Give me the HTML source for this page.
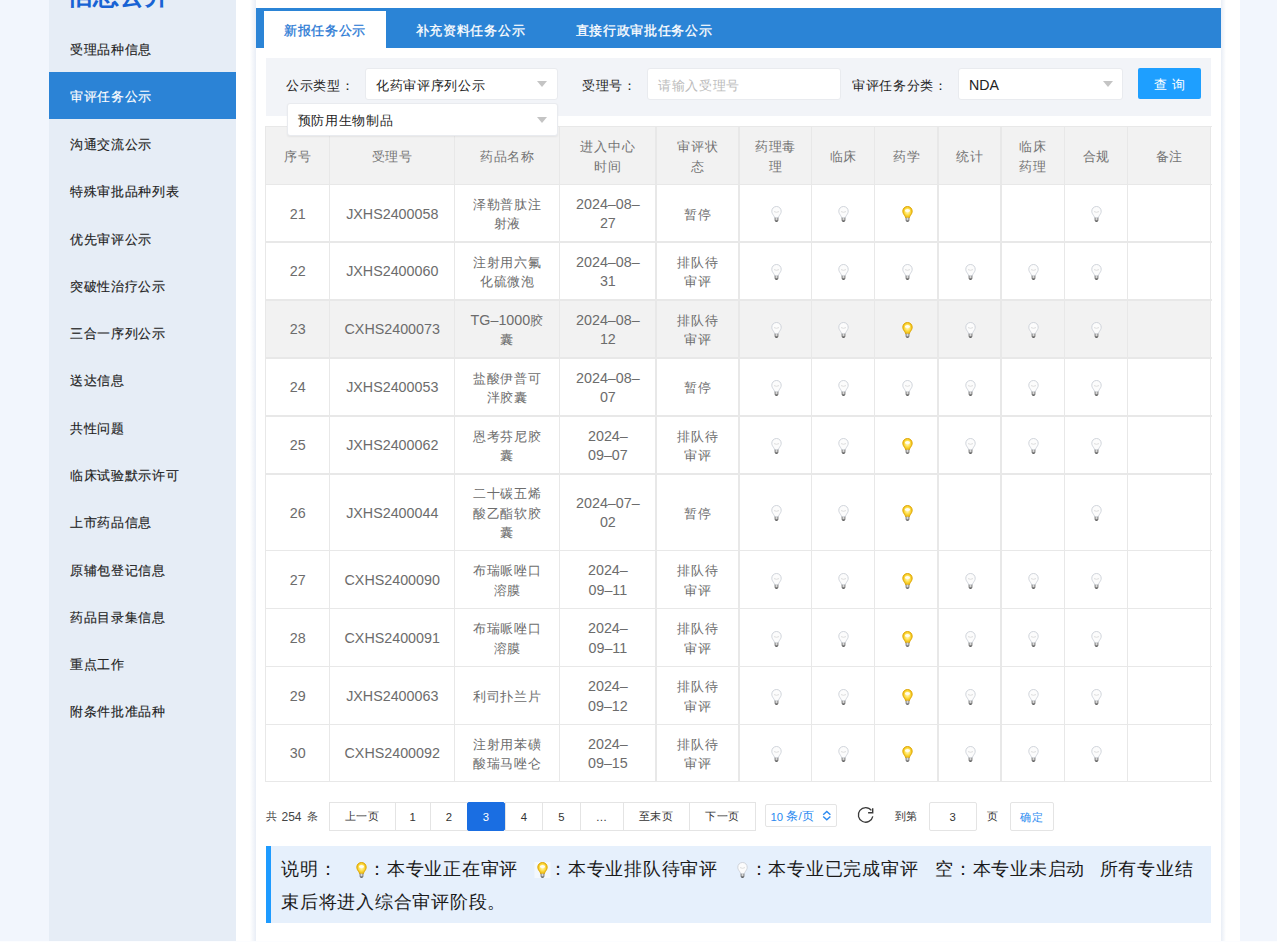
<!DOCTYPE html><html><head><meta charset="utf-8"><style>

*{box-sizing:border-box;margin:0;padding:0}
html,body{width:1280px;height:942px;overflow:hidden}
body{position:relative;background:#f2f6fd;font-family:"Liberation Sans",sans-serif;color:#333}
.abs{position:absolute}
.t{position:absolute;white-space:nowrap;line-height:1}
#side{position:absolute;left:49px;top:0;width:187px;height:941px;background:#e6edf6;overflow:hidden}
#white{position:absolute;left:236px;top:0;width:1004px;height:942px;background:#fff}
#panel{position:absolute;left:256px;top:0;width:965px;height:941px;background:#fff}
#shl{position:absolute;left:250px;top:0;width:6px;height:941px;background:linear-gradient(to right,rgba(230,236,245,0),#e9eef6)}
#shr{position:absolute;left:1221px;top:0;width:5px;height:941px;background:linear-gradient(to right,#e9eef6,rgba(230,236,245,0))}
.k{font-size:13.4px;letter-spacing:0.7px}
.si{position:absolute;left:0;width:187px;height:47.3px;line-height:47.3px;padding-left:21px;font-size:13.6px;color:#222;-webkit-text-stroke:0.15px #222}
.si > span{position:relative;top:2px}
.si.act{background:#2b83d6;color:#fff;-webkit-text-stroke:0.15px #fff}
.tab{position:absolute;top:11px;height:36.6px;line-height:39px;font-size:13.7px;color:#fff;text-align:center}
.tab.act{background:#fff;color:#2a7ad5;-webkit-text-stroke:0.3px #2a7ad5}
.tab{-webkit-text-stroke:0.3px #fff}
.lbl{position:absolute;font-size:13.7px;color:#222;line-height:32px;top:70px}
.sel{position:absolute;background:#fff;border:1px solid #e9ebef;border-radius:3px;font-size:14.2px;color:#222;line-height:32.5px;padding-left:10px}
.arr{position:absolute;width:0;height:0;border-left:5.5px solid transparent;border-right:5.5px solid transparent;border-top:6px solid #c4c4c4}
.hl{position:absolute;background:#e8e8e8}
.cell{position:absolute;display:flex;align-items:center;justify-content:center;text-align:center;font-size:14.3px;line-height:19.3px;color:#6c6c6c;padding-top:2px}
.hdr{color:#747474}
.pg{position:absolute;top:801.5px;height:29.5px;border:1px solid #e4e4e4;font-size:11.3px;color:#333;display:flex;align-items:center;justify-content:center;padding-top:1px}
.pk{font-size:11.4px;letter-spacing:0.5px}

</style></head><body>
<div id="white"></div>
<div id="side">
<div class="t" style="left:17.5px;top:-17.5px;font-size:26px;font-weight:bold;color:#1863d4;line-height:24px">信息公开</div>
<div class="si" style="top:24.35px"><span><span class="k">受理品种信息</span></span></div>
<div class="si act" style="top:71.64px"><span style="top:1.3px"><span class="k">审评任务公示</span></span></div>
<div class="si" style="top:118.93px"><span><span class="k">沟通交流公示</span></span></div>
<div class="si" style="top:166.22px"><span><span class="k">特殊审批品种列表</span></span></div>
<div class="si" style="top:213.51px"><span><span class="k">优先审评公示</span></span></div>
<div class="si" style="top:260.80px"><span><span class="k">突破性治疗公示</span></span></div>
<div class="si" style="top:308.09px"><span><span class="k">三合一序列公示</span></span></div>
<div class="si" style="top:355.38px"><span><span class="k">送达信息</span></span></div>
<div class="si" style="top:402.67px"><span><span class="k">共性问题</span></span></div>
<div class="si" style="top:449.96px"><span><span class="k">临床试验默示许可</span></span></div>
<div class="si" style="top:497.25px"><span><span class="k">上市药品信息</span></span></div>
<div class="si" style="top:544.54px"><span><span class="k">原辅包登记信息</span></span></div>
<div class="si" style="top:591.83px"><span><span class="k">药品目录集信息</span></span></div>
<div class="si" style="top:639.12px"><span><span class="k">重点工作</span></span></div>
<div class="si" style="top:686.41px"><span><span class="k">附条件批准品种</span></span></div>
</div>
<div id="shl"></div><div id="shr"></div><div id="panel"></div>
<div class="abs" style="left:256px;top:8px;width:965px;height:39.5px;background:#2b84d6"></div>
<div class="tab act" style="left:264px;width:122px"><span class="k">新报任务公示</span></div>
<div class="tab" style="left:386px;width:169px"><span class="k">补充资料任务公示</span></div>
<div class="tab" style="left:555px;width:178px"><span class="k">直接行政审批任务公示</span></div>
<div class="abs" style="left:266px;top:58px;width:945px;height:58.3px;background:#f2f4f8"></div>
<div class="lbl" style="left:286px"><span class="k">公示类型：</span></div>
<div class="sel" style="left:365px;top:68px;width:192.5px;height:32.3px"><span class="k">化药审评序列公示</span></div>
<div class="arr" style="left:537px;top:81px"></div>
<div class="lbl" style="left:582px"><span class="k">受理号：</span></div>
<div class="sel" style="left:647px;top:68px;width:193.5px;height:32.3px;color:#bbb"><span class="k">请输入受理号</span></div>
<div class="lbl" style="left:852px"><span class="k">审评任务分类：</span></div>
<div class="sel" style="left:958px;top:68px;width:165px;height:32.3px">NDA</div>
<div class="arr" style="left:1103px;top:81px"></div>
<div class="abs" style="left:1138px;top:67.5px;width:63px;height:31.3px;background:#1e9fff;border-radius:2px;color:#fff;font-size:13.7px;line-height:33px;text-align:center;letter-spacing:0;padding-left:0.7px"><span class="k">查</span> <span class="k">询</span></div>
<div class="abs" style="left:266px;top:126.5px;width:945px;height:58px;background:#f2f2f2"></div>
<div class="abs" style="left:266px;top:300px;width:945px;height:58px;background:#f2f2f2"></div>
<svg width="0" height="0" style="position:absolute"><defs><radialGradient id="gy" cx="0.5" cy="0.45" r="0.55"><stop offset="0" stop-color="#fffbd8"/><stop offset="0.5" stop-color="#ffe050"/><stop offset="1" stop-color="#eab500"/></radialGradient><linearGradient id="gb" x1="0" x2="1"><stop offset="0" stop-color="#777"/><stop offset="0.5" stop-color="#d8d8d8"/><stop offset="1" stop-color="#777"/></linearGradient></defs></svg>
<div class="cell hdr" style="left:266px;top:126.5px;width:63.5px;height:58.0px"><div><span class="k">序号</span></div></div>
<div class="cell hdr" style="left:329.5px;top:126.5px;width:125.5px;height:58.0px"><div><span class="k">受理号</span></div></div>
<div class="cell hdr" style="left:455px;top:126.5px;width:104.5px;height:58.0px"><div><span class="k">药品名称</span></div></div>
<div class="cell hdr" style="left:559.5px;top:126.5px;width:96.75px;height:58.0px"><div><span class="k">进入中心</span><br><span class="k">时间</span></div></div>
<div class="cell hdr" style="left:656.25px;top:126.5px;width:83.0px;height:58.0px"><div><span class="k">审评状</span><br><span class="k">态</span></div></div>
<div class="cell hdr" style="left:739.25px;top:126.5px;width:72.75px;height:58.0px"><div><span class="k">药理毒</span><br><span class="k">理</span></div></div>
<div class="cell hdr" style="left:812px;top:126.5px;width:63px;height:58.0px"><div><span class="k">临床</span></div></div>
<div class="cell hdr" style="left:875px;top:126.5px;width:63.25px;height:58.0px"><div><span class="k">药学</span></div></div>
<div class="cell hdr" style="left:938.25px;top:126.5px;width:63.0px;height:58.0px"><div><span class="k">统计</span></div></div>
<div class="cell hdr" style="left:1001.25px;top:126.5px;width:63.75px;height:58.0px"><div><span class="k">临床</span><br><span class="k">药理</span></div></div>
<div class="cell hdr" style="left:1065px;top:126.5px;width:63px;height:58.0px"><div><span class="k">合规</span></div></div>
<div class="cell hdr" style="left:1128px;top:126.5px;width:83px;height:58.0px"><div><span class="k">备注</span></div></div>
<div class="cell" style="left:266px;top:184.5px;width:63.5px;height:57.69999999999999px"><div>21</div></div>
<div class="cell" style="left:329.5px;top:184.5px;width:125.5px;height:57.69999999999999px"><div>JXHS2400058</div></div>
<div class="cell" style="left:455px;top:184.5px;width:104.5px;height:57.69999999999999px"><div><span class="k">泽勒普肽注</span><br><span class="k">射液</span></div></div>
<div class="cell" style="left:559.5px;top:184.5px;width:96.75px;height:57.69999999999999px"><div>2024–08–<br>27</div></div>
<div class="cell" style="left:656.25px;top:184.5px;width:83.0px;height:57.69999999999999px"><div><span class="k">暂停</span></div></div>
<svg class="abs" style="left:770.5px;top:206.3px;overflow:visible" width="11" height="16" viewBox="0 0 11 16"><path d="M5.5 0.5C2.8 0.5 0.8 2.6 0.8 5.2C0.8 7.1 1.8 8.3 2.6 9.5C3.1 10.3 3.5 11 3.6 11.8H7.4C7.5 11 7.9 10.3 8.4 9.5C9.2 8.3 10.2 7.1 10.2 5.2C10.2 2.6 8.2 0.5 5.5 0.5Z" fill="#fcfcfc" stroke="#c9ced6" stroke-width="0.9"/><path d="M3 5.6Q5.5 7 8 5.6" fill="none" stroke="#d6d6d6" stroke-width="0.8"/><rect x="3.6" y="11.7" width="3.8" height="3" fill="url(#gb)"/><path d="M3.8 14.6H7.2L6.4 15.8H4.6Z" fill="#333"/></svg>
<svg class="abs" style="left:838.4px;top:206.3px;overflow:visible" width="11" height="16" viewBox="0 0 11 16"><path d="M5.5 0.5C2.8 0.5 0.8 2.6 0.8 5.2C0.8 7.1 1.8 8.3 2.6 9.5C3.1 10.3 3.5 11 3.6 11.8H7.4C7.5 11 7.9 10.3 8.4 9.5C9.2 8.3 10.2 7.1 10.2 5.2C10.2 2.6 8.2 0.5 5.5 0.5Z" fill="#fcfcfc" stroke="#c9ced6" stroke-width="0.9"/><path d="M3 5.6Q5.5 7 8 5.6" fill="none" stroke="#d6d6d6" stroke-width="0.8"/><rect x="3.6" y="11.7" width="3.8" height="3" fill="url(#gb)"/><path d="M3.8 14.6H7.2L6.4 15.8H4.6Z" fill="#333"/></svg>
<svg class="abs" style="left:901.5px;top:206.3px;overflow:visible" width="11" height="16" viewBox="0 0 11 16"><path d="M5.5 0.5C2.8 0.5 0.8 2.6 0.8 5.2C0.8 7.1 1.8 8.3 2.6 9.5C3.1 10.3 3.5 11 3.6 11.8H7.4C7.5 11 7.9 10.3 8.4 9.5C9.2 8.3 10.2 7.1 10.2 5.2C10.2 2.6 8.2 0.5 5.5 0.5Z" fill="url(#gy)" stroke="#dca300" stroke-width="0.9"/><ellipse cx="5.5" cy="4.4" rx="2.6" ry="1.5" fill="#fffdf0"/><rect x="3.6" y="11.7" width="3.8" height="3" fill="url(#gb)"/><path d="M3.8 14.6H7.2L6.4 15.8H4.6Z" fill="#444"/></svg>
<svg class="abs" style="left:1091.4px;top:206.3px;overflow:visible" width="11" height="16" viewBox="0 0 11 16"><path d="M5.5 0.5C2.8 0.5 0.8 2.6 0.8 5.2C0.8 7.1 1.8 8.3 2.6 9.5C3.1 10.3 3.5 11 3.6 11.8H7.4C7.5 11 7.9 10.3 8.4 9.5C9.2 8.3 10.2 7.1 10.2 5.2C10.2 2.6 8.2 0.5 5.5 0.5Z" fill="#fcfcfc" stroke="#c9ced6" stroke-width="0.9"/><path d="M3 5.6Q5.5 7 8 5.6" fill="none" stroke="#d6d6d6" stroke-width="0.8"/><rect x="3.6" y="11.7" width="3.8" height="3" fill="url(#gb)"/><path d="M3.8 14.6H7.2L6.4 15.8H4.6Z" fill="#333"/></svg>
<div class="cell" style="left:266px;top:242.2px;width:63.5px;height:57.80000000000001px"><div>22</div></div>
<div class="cell" style="left:329.5px;top:242.2px;width:125.5px;height:57.80000000000001px"><div>JXHS2400060</div></div>
<div class="cell" style="left:455px;top:242.2px;width:104.5px;height:57.80000000000001px"><div><span class="k">注射用六氟</span><br><span class="k">化硫微泡</span></div></div>
<div class="cell" style="left:559.5px;top:242.2px;width:96.75px;height:57.80000000000001px"><div>2024–08–<br>31</div></div>
<div class="cell" style="left:656.25px;top:242.2px;width:83.0px;height:57.80000000000001px"><div><span class="k">排队待</span><br><span class="k">审评</span></div></div>
<svg class="abs" style="left:770.5px;top:264.1px;overflow:visible" width="11" height="16" viewBox="0 0 11 16"><path d="M5.5 0.5C2.8 0.5 0.8 2.6 0.8 5.2C0.8 7.1 1.8 8.3 2.6 9.5C3.1 10.3 3.5 11 3.6 11.8H7.4C7.5 11 7.9 10.3 8.4 9.5C9.2 8.3 10.2 7.1 10.2 5.2C10.2 2.6 8.2 0.5 5.5 0.5Z" fill="#fcfcfc" stroke="#c9ced6" stroke-width="0.9"/><path d="M3 5.6Q5.5 7 8 5.6" fill="none" stroke="#d6d6d6" stroke-width="0.8"/><rect x="3.6" y="11.7" width="3.8" height="3" fill="url(#gb)"/><path d="M3.8 14.6H7.2L6.4 15.8H4.6Z" fill="#333"/></svg>
<svg class="abs" style="left:838.4px;top:264.1px;overflow:visible" width="11" height="16" viewBox="0 0 11 16"><path d="M5.5 0.5C2.8 0.5 0.8 2.6 0.8 5.2C0.8 7.1 1.8 8.3 2.6 9.5C3.1 10.3 3.5 11 3.6 11.8H7.4C7.5 11 7.9 10.3 8.4 9.5C9.2 8.3 10.2 7.1 10.2 5.2C10.2 2.6 8.2 0.5 5.5 0.5Z" fill="#fcfcfc" stroke="#c9ced6" stroke-width="0.9"/><path d="M3 5.6Q5.5 7 8 5.6" fill="none" stroke="#d6d6d6" stroke-width="0.8"/><rect x="3.6" y="11.7" width="3.8" height="3" fill="url(#gb)"/><path d="M3.8 14.6H7.2L6.4 15.8H4.6Z" fill="#333"/></svg>
<svg class="abs" style="left:901.5px;top:264.1px;overflow:visible" width="11" height="16" viewBox="0 0 11 16"><path d="M5.5 0.5C2.8 0.5 0.8 2.6 0.8 5.2C0.8 7.1 1.8 8.3 2.6 9.5C3.1 10.3 3.5 11 3.6 11.8H7.4C7.5 11 7.9 10.3 8.4 9.5C9.2 8.3 10.2 7.1 10.2 5.2C10.2 2.6 8.2 0.5 5.5 0.5Z" fill="#fcfcfc" stroke="#c9ced6" stroke-width="0.9"/><path d="M3 5.6Q5.5 7 8 5.6" fill="none" stroke="#d6d6d6" stroke-width="0.8"/><rect x="3.6" y="11.7" width="3.8" height="3" fill="url(#gb)"/><path d="M3.8 14.6H7.2L6.4 15.8H4.6Z" fill="#333"/></svg>
<svg class="abs" style="left:964.6px;top:264.1px;overflow:visible" width="11" height="16" viewBox="0 0 11 16"><path d="M5.5 0.5C2.8 0.5 0.8 2.6 0.8 5.2C0.8 7.1 1.8 8.3 2.6 9.5C3.1 10.3 3.5 11 3.6 11.8H7.4C7.5 11 7.9 10.3 8.4 9.5C9.2 8.3 10.2 7.1 10.2 5.2C10.2 2.6 8.2 0.5 5.5 0.5Z" fill="#fcfcfc" stroke="#c9ced6" stroke-width="0.9"/><path d="M3 5.6Q5.5 7 8 5.6" fill="none" stroke="#d6d6d6" stroke-width="0.8"/><rect x="3.6" y="11.7" width="3.8" height="3" fill="url(#gb)"/><path d="M3.8 14.6H7.2L6.4 15.8H4.6Z" fill="#333"/></svg>
<svg class="abs" style="left:1028.0px;top:264.1px;overflow:visible" width="11" height="16" viewBox="0 0 11 16"><path d="M5.5 0.5C2.8 0.5 0.8 2.6 0.8 5.2C0.8 7.1 1.8 8.3 2.6 9.5C3.1 10.3 3.5 11 3.6 11.8H7.4C7.5 11 7.9 10.3 8.4 9.5C9.2 8.3 10.2 7.1 10.2 5.2C10.2 2.6 8.2 0.5 5.5 0.5Z" fill="#fcfcfc" stroke="#c9ced6" stroke-width="0.9"/><path d="M3 5.6Q5.5 7 8 5.6" fill="none" stroke="#d6d6d6" stroke-width="0.8"/><rect x="3.6" y="11.7" width="3.8" height="3" fill="url(#gb)"/><path d="M3.8 14.6H7.2L6.4 15.8H4.6Z" fill="#333"/></svg>
<svg class="abs" style="left:1091.4px;top:264.1px;overflow:visible" width="11" height="16" viewBox="0 0 11 16"><path d="M5.5 0.5C2.8 0.5 0.8 2.6 0.8 5.2C0.8 7.1 1.8 8.3 2.6 9.5C3.1 10.3 3.5 11 3.6 11.8H7.4C7.5 11 7.9 10.3 8.4 9.5C9.2 8.3 10.2 7.1 10.2 5.2C10.2 2.6 8.2 0.5 5.5 0.5Z" fill="#fcfcfc" stroke="#c9ced6" stroke-width="0.9"/><path d="M3 5.6Q5.5 7 8 5.6" fill="none" stroke="#d6d6d6" stroke-width="0.8"/><rect x="3.6" y="11.7" width="3.8" height="3" fill="url(#gb)"/><path d="M3.8 14.6H7.2L6.4 15.8H4.6Z" fill="#333"/></svg>
<div class="cell" style="left:266px;top:300px;width:63.5px;height:58px"><div>23</div></div>
<div class="cell" style="left:329.5px;top:300px;width:125.5px;height:58px"><div>CXHS2400073</div></div>
<div class="cell" style="left:455px;top:300px;width:104.5px;height:58px"><div>TG–1000<span class="k">胶</span><br><span class="k">囊</span></div></div>
<div class="cell" style="left:559.5px;top:300px;width:96.75px;height:58px"><div>2024–08–<br>12</div></div>
<div class="cell" style="left:656.25px;top:300px;width:83.0px;height:58px"><div><span class="k">排队待</span><br><span class="k">审评</span></div></div>
<svg class="abs" style="left:770.5px;top:322.0px;overflow:visible" width="11" height="16" viewBox="0 0 11 16"><path d="M5.5 0.5C2.8 0.5 0.8 2.6 0.8 5.2C0.8 7.1 1.8 8.3 2.6 9.5C3.1 10.3 3.5 11 3.6 11.8H7.4C7.5 11 7.9 10.3 8.4 9.5C9.2 8.3 10.2 7.1 10.2 5.2C10.2 2.6 8.2 0.5 5.5 0.5Z" fill="#fcfcfc" stroke="#c9ced6" stroke-width="0.9"/><path d="M3 5.6Q5.5 7 8 5.6" fill="none" stroke="#d6d6d6" stroke-width="0.8"/><rect x="3.6" y="11.7" width="3.8" height="3" fill="url(#gb)"/><path d="M3.8 14.6H7.2L6.4 15.8H4.6Z" fill="#333"/></svg>
<svg class="abs" style="left:838.4px;top:322.0px;overflow:visible" width="11" height="16" viewBox="0 0 11 16"><path d="M5.5 0.5C2.8 0.5 0.8 2.6 0.8 5.2C0.8 7.1 1.8 8.3 2.6 9.5C3.1 10.3 3.5 11 3.6 11.8H7.4C7.5 11 7.9 10.3 8.4 9.5C9.2 8.3 10.2 7.1 10.2 5.2C10.2 2.6 8.2 0.5 5.5 0.5Z" fill="#fcfcfc" stroke="#c9ced6" stroke-width="0.9"/><path d="M3 5.6Q5.5 7 8 5.6" fill="none" stroke="#d6d6d6" stroke-width="0.8"/><rect x="3.6" y="11.7" width="3.8" height="3" fill="url(#gb)"/><path d="M3.8 14.6H7.2L6.4 15.8H4.6Z" fill="#333"/></svg>
<svg class="abs" style="left:901.5px;top:322.0px;overflow:visible" width="11" height="16" viewBox="0 0 11 16"><path d="M5.5 0.5C2.8 0.5 0.8 2.6 0.8 5.2C0.8 7.1 1.8 8.3 2.6 9.5C3.1 10.3 3.5 11 3.6 11.8H7.4C7.5 11 7.9 10.3 8.4 9.5C9.2 8.3 10.2 7.1 10.2 5.2C10.2 2.6 8.2 0.5 5.5 0.5Z" fill="url(#gy)" stroke="#dca300" stroke-width="0.9"/><ellipse cx="5.5" cy="4.4" rx="2.6" ry="1.5" fill="#fffdf0"/><rect x="3.6" y="11.7" width="3.8" height="3" fill="url(#gb)"/><path d="M3.8 14.6H7.2L6.4 15.8H4.6Z" fill="#444"/></svg>
<svg class="abs" style="left:964.6px;top:322.0px;overflow:visible" width="11" height="16" viewBox="0 0 11 16"><path d="M5.5 0.5C2.8 0.5 0.8 2.6 0.8 5.2C0.8 7.1 1.8 8.3 2.6 9.5C3.1 10.3 3.5 11 3.6 11.8H7.4C7.5 11 7.9 10.3 8.4 9.5C9.2 8.3 10.2 7.1 10.2 5.2C10.2 2.6 8.2 0.5 5.5 0.5Z" fill="#fcfcfc" stroke="#c9ced6" stroke-width="0.9"/><path d="M3 5.6Q5.5 7 8 5.6" fill="none" stroke="#d6d6d6" stroke-width="0.8"/><rect x="3.6" y="11.7" width="3.8" height="3" fill="url(#gb)"/><path d="M3.8 14.6H7.2L6.4 15.8H4.6Z" fill="#333"/></svg>
<svg class="abs" style="left:1028.0px;top:322.0px;overflow:visible" width="11" height="16" viewBox="0 0 11 16"><path d="M5.5 0.5C2.8 0.5 0.8 2.6 0.8 5.2C0.8 7.1 1.8 8.3 2.6 9.5C3.1 10.3 3.5 11 3.6 11.8H7.4C7.5 11 7.9 10.3 8.4 9.5C9.2 8.3 10.2 7.1 10.2 5.2C10.2 2.6 8.2 0.5 5.5 0.5Z" fill="#fcfcfc" stroke="#c9ced6" stroke-width="0.9"/><path d="M3 5.6Q5.5 7 8 5.6" fill="none" stroke="#d6d6d6" stroke-width="0.8"/><rect x="3.6" y="11.7" width="3.8" height="3" fill="url(#gb)"/><path d="M3.8 14.6H7.2L6.4 15.8H4.6Z" fill="#333"/></svg>
<svg class="abs" style="left:1091.4px;top:322.0px;overflow:visible" width="11" height="16" viewBox="0 0 11 16"><path d="M5.5 0.5C2.8 0.5 0.8 2.6 0.8 5.2C0.8 7.1 1.8 8.3 2.6 9.5C3.1 10.3 3.5 11 3.6 11.8H7.4C7.5 11 7.9 10.3 8.4 9.5C9.2 8.3 10.2 7.1 10.2 5.2C10.2 2.6 8.2 0.5 5.5 0.5Z" fill="#fcfcfc" stroke="#c9ced6" stroke-width="0.9"/><path d="M3 5.6Q5.5 7 8 5.6" fill="none" stroke="#d6d6d6" stroke-width="0.8"/><rect x="3.6" y="11.7" width="3.8" height="3" fill="url(#gb)"/><path d="M3.8 14.6H7.2L6.4 15.8H4.6Z" fill="#333"/></svg>
<div class="cell" style="left:266px;top:358px;width:63.5px;height:58px"><div>24</div></div>
<div class="cell" style="left:329.5px;top:358px;width:125.5px;height:58px"><div>JXHS2400053</div></div>
<div class="cell" style="left:455px;top:358px;width:104.5px;height:58px"><div><span class="k">盐酸伊普可</span><br><span class="k">泮胶囊</span></div></div>
<div class="cell" style="left:559.5px;top:358px;width:96.75px;height:58px"><div>2024–08–<br>07</div></div>
<div class="cell" style="left:656.25px;top:358px;width:83.0px;height:58px"><div><span class="k">暂停</span></div></div>
<svg class="abs" style="left:770.5px;top:380.0px;overflow:visible" width="11" height="16" viewBox="0 0 11 16"><path d="M5.5 0.5C2.8 0.5 0.8 2.6 0.8 5.2C0.8 7.1 1.8 8.3 2.6 9.5C3.1 10.3 3.5 11 3.6 11.8H7.4C7.5 11 7.9 10.3 8.4 9.5C9.2 8.3 10.2 7.1 10.2 5.2C10.2 2.6 8.2 0.5 5.5 0.5Z" fill="#fcfcfc" stroke="#c9ced6" stroke-width="0.9"/><path d="M3 5.6Q5.5 7 8 5.6" fill="none" stroke="#d6d6d6" stroke-width="0.8"/><rect x="3.6" y="11.7" width="3.8" height="3" fill="url(#gb)"/><path d="M3.8 14.6H7.2L6.4 15.8H4.6Z" fill="#333"/></svg>
<svg class="abs" style="left:838.4px;top:380.0px;overflow:visible" width="11" height="16" viewBox="0 0 11 16"><path d="M5.5 0.5C2.8 0.5 0.8 2.6 0.8 5.2C0.8 7.1 1.8 8.3 2.6 9.5C3.1 10.3 3.5 11 3.6 11.8H7.4C7.5 11 7.9 10.3 8.4 9.5C9.2 8.3 10.2 7.1 10.2 5.2C10.2 2.6 8.2 0.5 5.5 0.5Z" fill="#fcfcfc" stroke="#c9ced6" stroke-width="0.9"/><path d="M3 5.6Q5.5 7 8 5.6" fill="none" stroke="#d6d6d6" stroke-width="0.8"/><rect x="3.6" y="11.7" width="3.8" height="3" fill="url(#gb)"/><path d="M3.8 14.6H7.2L6.4 15.8H4.6Z" fill="#333"/></svg>
<svg class="abs" style="left:901.5px;top:380.0px;overflow:visible" width="11" height="16" viewBox="0 0 11 16"><path d="M5.5 0.5C2.8 0.5 0.8 2.6 0.8 5.2C0.8 7.1 1.8 8.3 2.6 9.5C3.1 10.3 3.5 11 3.6 11.8H7.4C7.5 11 7.9 10.3 8.4 9.5C9.2 8.3 10.2 7.1 10.2 5.2C10.2 2.6 8.2 0.5 5.5 0.5Z" fill="#fcfcfc" stroke="#c9ced6" stroke-width="0.9"/><path d="M3 5.6Q5.5 7 8 5.6" fill="none" stroke="#d6d6d6" stroke-width="0.8"/><rect x="3.6" y="11.7" width="3.8" height="3" fill="url(#gb)"/><path d="M3.8 14.6H7.2L6.4 15.8H4.6Z" fill="#333"/></svg>
<svg class="abs" style="left:964.6px;top:380.0px;overflow:visible" width="11" height="16" viewBox="0 0 11 16"><path d="M5.5 0.5C2.8 0.5 0.8 2.6 0.8 5.2C0.8 7.1 1.8 8.3 2.6 9.5C3.1 10.3 3.5 11 3.6 11.8H7.4C7.5 11 7.9 10.3 8.4 9.5C9.2 8.3 10.2 7.1 10.2 5.2C10.2 2.6 8.2 0.5 5.5 0.5Z" fill="#fcfcfc" stroke="#c9ced6" stroke-width="0.9"/><path d="M3 5.6Q5.5 7 8 5.6" fill="none" stroke="#d6d6d6" stroke-width="0.8"/><rect x="3.6" y="11.7" width="3.8" height="3" fill="url(#gb)"/><path d="M3.8 14.6H7.2L6.4 15.8H4.6Z" fill="#333"/></svg>
<svg class="abs" style="left:1028.0px;top:380.0px;overflow:visible" width="11" height="16" viewBox="0 0 11 16"><path d="M5.5 0.5C2.8 0.5 0.8 2.6 0.8 5.2C0.8 7.1 1.8 8.3 2.6 9.5C3.1 10.3 3.5 11 3.6 11.8H7.4C7.5 11 7.9 10.3 8.4 9.5C9.2 8.3 10.2 7.1 10.2 5.2C10.2 2.6 8.2 0.5 5.5 0.5Z" fill="#fcfcfc" stroke="#c9ced6" stroke-width="0.9"/><path d="M3 5.6Q5.5 7 8 5.6" fill="none" stroke="#d6d6d6" stroke-width="0.8"/><rect x="3.6" y="11.7" width="3.8" height="3" fill="url(#gb)"/><path d="M3.8 14.6H7.2L6.4 15.8H4.6Z" fill="#333"/></svg>
<svg class="abs" style="left:1091.4px;top:380.0px;overflow:visible" width="11" height="16" viewBox="0 0 11 16"><path d="M5.5 0.5C2.8 0.5 0.8 2.6 0.8 5.2C0.8 7.1 1.8 8.3 2.6 9.5C3.1 10.3 3.5 11 3.6 11.8H7.4C7.5 11 7.9 10.3 8.4 9.5C9.2 8.3 10.2 7.1 10.2 5.2C10.2 2.6 8.2 0.5 5.5 0.5Z" fill="#fcfcfc" stroke="#c9ced6" stroke-width="0.9"/><path d="M3 5.6Q5.5 7 8 5.6" fill="none" stroke="#d6d6d6" stroke-width="0.8"/><rect x="3.6" y="11.7" width="3.8" height="3" fill="url(#gb)"/><path d="M3.8 14.6H7.2L6.4 15.8H4.6Z" fill="#333"/></svg>
<div class="cell" style="left:266px;top:416px;width:63.5px;height:58px"><div>25</div></div>
<div class="cell" style="left:329.5px;top:416px;width:125.5px;height:58px"><div>JXHS2400062</div></div>
<div class="cell" style="left:455px;top:416px;width:104.5px;height:58px"><div><span class="k">恩考芬尼胶</span><br><span class="k">囊</span></div></div>
<div class="cell" style="left:559.5px;top:416px;width:96.75px;height:58px"><div>2024–<br>09–07</div></div>
<div class="cell" style="left:656.25px;top:416px;width:83.0px;height:58px"><div><span class="k">排队待</span><br><span class="k">审评</span></div></div>
<svg class="abs" style="left:770.5px;top:438.0px;overflow:visible" width="11" height="16" viewBox="0 0 11 16"><path d="M5.5 0.5C2.8 0.5 0.8 2.6 0.8 5.2C0.8 7.1 1.8 8.3 2.6 9.5C3.1 10.3 3.5 11 3.6 11.8H7.4C7.5 11 7.9 10.3 8.4 9.5C9.2 8.3 10.2 7.1 10.2 5.2C10.2 2.6 8.2 0.5 5.5 0.5Z" fill="#fcfcfc" stroke="#c9ced6" stroke-width="0.9"/><path d="M3 5.6Q5.5 7 8 5.6" fill="none" stroke="#d6d6d6" stroke-width="0.8"/><rect x="3.6" y="11.7" width="3.8" height="3" fill="url(#gb)"/><path d="M3.8 14.6H7.2L6.4 15.8H4.6Z" fill="#333"/></svg>
<svg class="abs" style="left:838.4px;top:438.0px;overflow:visible" width="11" height="16" viewBox="0 0 11 16"><path d="M5.5 0.5C2.8 0.5 0.8 2.6 0.8 5.2C0.8 7.1 1.8 8.3 2.6 9.5C3.1 10.3 3.5 11 3.6 11.8H7.4C7.5 11 7.9 10.3 8.4 9.5C9.2 8.3 10.2 7.1 10.2 5.2C10.2 2.6 8.2 0.5 5.5 0.5Z" fill="#fcfcfc" stroke="#c9ced6" stroke-width="0.9"/><path d="M3 5.6Q5.5 7 8 5.6" fill="none" stroke="#d6d6d6" stroke-width="0.8"/><rect x="3.6" y="11.7" width="3.8" height="3" fill="url(#gb)"/><path d="M3.8 14.6H7.2L6.4 15.8H4.6Z" fill="#333"/></svg>
<svg class="abs" style="left:901.5px;top:438.0px;overflow:visible" width="11" height="16" viewBox="0 0 11 16"><path d="M5.5 0.5C2.8 0.5 0.8 2.6 0.8 5.2C0.8 7.1 1.8 8.3 2.6 9.5C3.1 10.3 3.5 11 3.6 11.8H7.4C7.5 11 7.9 10.3 8.4 9.5C9.2 8.3 10.2 7.1 10.2 5.2C10.2 2.6 8.2 0.5 5.5 0.5Z" fill="url(#gy)" stroke="#dca300" stroke-width="0.9"/><ellipse cx="5.5" cy="4.4" rx="2.6" ry="1.5" fill="#fffdf0"/><rect x="3.6" y="11.7" width="3.8" height="3" fill="url(#gb)"/><path d="M3.8 14.6H7.2L6.4 15.8H4.6Z" fill="#444"/></svg>
<svg class="abs" style="left:964.6px;top:438.0px;overflow:visible" width="11" height="16" viewBox="0 0 11 16"><path d="M5.5 0.5C2.8 0.5 0.8 2.6 0.8 5.2C0.8 7.1 1.8 8.3 2.6 9.5C3.1 10.3 3.5 11 3.6 11.8H7.4C7.5 11 7.9 10.3 8.4 9.5C9.2 8.3 10.2 7.1 10.2 5.2C10.2 2.6 8.2 0.5 5.5 0.5Z" fill="#fcfcfc" stroke="#c9ced6" stroke-width="0.9"/><path d="M3 5.6Q5.5 7 8 5.6" fill="none" stroke="#d6d6d6" stroke-width="0.8"/><rect x="3.6" y="11.7" width="3.8" height="3" fill="url(#gb)"/><path d="M3.8 14.6H7.2L6.4 15.8H4.6Z" fill="#333"/></svg>
<svg class="abs" style="left:1028.0px;top:438.0px;overflow:visible" width="11" height="16" viewBox="0 0 11 16"><path d="M5.5 0.5C2.8 0.5 0.8 2.6 0.8 5.2C0.8 7.1 1.8 8.3 2.6 9.5C3.1 10.3 3.5 11 3.6 11.8H7.4C7.5 11 7.9 10.3 8.4 9.5C9.2 8.3 10.2 7.1 10.2 5.2C10.2 2.6 8.2 0.5 5.5 0.5Z" fill="#fcfcfc" stroke="#c9ced6" stroke-width="0.9"/><path d="M3 5.6Q5.5 7 8 5.6" fill="none" stroke="#d6d6d6" stroke-width="0.8"/><rect x="3.6" y="11.7" width="3.8" height="3" fill="url(#gb)"/><path d="M3.8 14.6H7.2L6.4 15.8H4.6Z" fill="#333"/></svg>
<svg class="abs" style="left:1091.4px;top:438.0px;overflow:visible" width="11" height="16" viewBox="0 0 11 16"><path d="M5.5 0.5C2.8 0.5 0.8 2.6 0.8 5.2C0.8 7.1 1.8 8.3 2.6 9.5C3.1 10.3 3.5 11 3.6 11.8H7.4C7.5 11 7.9 10.3 8.4 9.5C9.2 8.3 10.2 7.1 10.2 5.2C10.2 2.6 8.2 0.5 5.5 0.5Z" fill="#fcfcfc" stroke="#c9ced6" stroke-width="0.9"/><path d="M3 5.6Q5.5 7 8 5.6" fill="none" stroke="#d6d6d6" stroke-width="0.8"/><rect x="3.6" y="11.7" width="3.8" height="3" fill="url(#gb)"/><path d="M3.8 14.6H7.2L6.4 15.8H4.6Z" fill="#333"/></svg>
<div class="cell" style="left:266px;top:474px;width:63.5px;height:76.5px"><div>26</div></div>
<div class="cell" style="left:329.5px;top:474px;width:125.5px;height:76.5px"><div>JXHS2400044</div></div>
<div class="cell" style="left:455px;top:474px;width:104.5px;height:76.5px"><div><span class="k">二十碳五烯</span><br><span class="k">酸乙酯软胶</span><br><span class="k">囊</span></div></div>
<div class="cell" style="left:559.5px;top:474px;width:96.75px;height:76.5px"><div>2024–07–<br>02</div></div>
<div class="cell" style="left:656.25px;top:474px;width:83.0px;height:76.5px"><div><span class="k">暂停</span></div></div>
<svg class="abs" style="left:770.5px;top:505.2px;overflow:visible" width="11" height="16" viewBox="0 0 11 16"><path d="M5.5 0.5C2.8 0.5 0.8 2.6 0.8 5.2C0.8 7.1 1.8 8.3 2.6 9.5C3.1 10.3 3.5 11 3.6 11.8H7.4C7.5 11 7.9 10.3 8.4 9.5C9.2 8.3 10.2 7.1 10.2 5.2C10.2 2.6 8.2 0.5 5.5 0.5Z" fill="#fcfcfc" stroke="#c9ced6" stroke-width="0.9"/><path d="M3 5.6Q5.5 7 8 5.6" fill="none" stroke="#d6d6d6" stroke-width="0.8"/><rect x="3.6" y="11.7" width="3.8" height="3" fill="url(#gb)"/><path d="M3.8 14.6H7.2L6.4 15.8H4.6Z" fill="#333"/></svg>
<svg class="abs" style="left:838.4px;top:505.2px;overflow:visible" width="11" height="16" viewBox="0 0 11 16"><path d="M5.5 0.5C2.8 0.5 0.8 2.6 0.8 5.2C0.8 7.1 1.8 8.3 2.6 9.5C3.1 10.3 3.5 11 3.6 11.8H7.4C7.5 11 7.9 10.3 8.4 9.5C9.2 8.3 10.2 7.1 10.2 5.2C10.2 2.6 8.2 0.5 5.5 0.5Z" fill="#fcfcfc" stroke="#c9ced6" stroke-width="0.9"/><path d="M3 5.6Q5.5 7 8 5.6" fill="none" stroke="#d6d6d6" stroke-width="0.8"/><rect x="3.6" y="11.7" width="3.8" height="3" fill="url(#gb)"/><path d="M3.8 14.6H7.2L6.4 15.8H4.6Z" fill="#333"/></svg>
<svg class="abs" style="left:901.5px;top:505.2px;overflow:visible" width="11" height="16" viewBox="0 0 11 16"><path d="M5.5 0.5C2.8 0.5 0.8 2.6 0.8 5.2C0.8 7.1 1.8 8.3 2.6 9.5C3.1 10.3 3.5 11 3.6 11.8H7.4C7.5 11 7.9 10.3 8.4 9.5C9.2 8.3 10.2 7.1 10.2 5.2C10.2 2.6 8.2 0.5 5.5 0.5Z" fill="url(#gy)" stroke="#dca300" stroke-width="0.9"/><ellipse cx="5.5" cy="4.4" rx="2.6" ry="1.5" fill="#fffdf0"/><rect x="3.6" y="11.7" width="3.8" height="3" fill="url(#gb)"/><path d="M3.8 14.6H7.2L6.4 15.8H4.6Z" fill="#444"/></svg>
<svg class="abs" style="left:1091.4px;top:505.2px;overflow:visible" width="11" height="16" viewBox="0 0 11 16"><path d="M5.5 0.5C2.8 0.5 0.8 2.6 0.8 5.2C0.8 7.1 1.8 8.3 2.6 9.5C3.1 10.3 3.5 11 3.6 11.8H7.4C7.5 11 7.9 10.3 8.4 9.5C9.2 8.3 10.2 7.1 10.2 5.2C10.2 2.6 8.2 0.5 5.5 0.5Z" fill="#fcfcfc" stroke="#c9ced6" stroke-width="0.9"/><path d="M3 5.6Q5.5 7 8 5.6" fill="none" stroke="#d6d6d6" stroke-width="0.8"/><rect x="3.6" y="11.7" width="3.8" height="3" fill="url(#gb)"/><path d="M3.8 14.6H7.2L6.4 15.8H4.6Z" fill="#333"/></svg>
<div class="cell" style="left:266px;top:550.5px;width:63.5px;height:58.0px"><div>27</div></div>
<div class="cell" style="left:329.5px;top:550.5px;width:125.5px;height:58.0px"><div>CXHS2400090</div></div>
<div class="cell" style="left:455px;top:550.5px;width:104.5px;height:58.0px"><div><span class="k">布瑞哌唑口</span><br><span class="k">溶膜</span></div></div>
<div class="cell" style="left:559.5px;top:550.5px;width:96.75px;height:58.0px"><div>2024–<br>09–11</div></div>
<div class="cell" style="left:656.25px;top:550.5px;width:83.0px;height:58.0px"><div><span class="k">排队待</span><br><span class="k">审评</span></div></div>
<svg class="abs" style="left:770.5px;top:572.5px;overflow:visible" width="11" height="16" viewBox="0 0 11 16"><path d="M5.5 0.5C2.8 0.5 0.8 2.6 0.8 5.2C0.8 7.1 1.8 8.3 2.6 9.5C3.1 10.3 3.5 11 3.6 11.8H7.4C7.5 11 7.9 10.3 8.4 9.5C9.2 8.3 10.2 7.1 10.2 5.2C10.2 2.6 8.2 0.5 5.5 0.5Z" fill="#fcfcfc" stroke="#c9ced6" stroke-width="0.9"/><path d="M3 5.6Q5.5 7 8 5.6" fill="none" stroke="#d6d6d6" stroke-width="0.8"/><rect x="3.6" y="11.7" width="3.8" height="3" fill="url(#gb)"/><path d="M3.8 14.6H7.2L6.4 15.8H4.6Z" fill="#333"/></svg>
<svg class="abs" style="left:838.4px;top:572.5px;overflow:visible" width="11" height="16" viewBox="0 0 11 16"><path d="M5.5 0.5C2.8 0.5 0.8 2.6 0.8 5.2C0.8 7.1 1.8 8.3 2.6 9.5C3.1 10.3 3.5 11 3.6 11.8H7.4C7.5 11 7.9 10.3 8.4 9.5C9.2 8.3 10.2 7.1 10.2 5.2C10.2 2.6 8.2 0.5 5.5 0.5Z" fill="#fcfcfc" stroke="#c9ced6" stroke-width="0.9"/><path d="M3 5.6Q5.5 7 8 5.6" fill="none" stroke="#d6d6d6" stroke-width="0.8"/><rect x="3.6" y="11.7" width="3.8" height="3" fill="url(#gb)"/><path d="M3.8 14.6H7.2L6.4 15.8H4.6Z" fill="#333"/></svg>
<svg class="abs" style="left:901.5px;top:572.5px;overflow:visible" width="11" height="16" viewBox="0 0 11 16"><path d="M5.5 0.5C2.8 0.5 0.8 2.6 0.8 5.2C0.8 7.1 1.8 8.3 2.6 9.5C3.1 10.3 3.5 11 3.6 11.8H7.4C7.5 11 7.9 10.3 8.4 9.5C9.2 8.3 10.2 7.1 10.2 5.2C10.2 2.6 8.2 0.5 5.5 0.5Z" fill="url(#gy)" stroke="#dca300" stroke-width="0.9"/><ellipse cx="5.5" cy="4.4" rx="2.6" ry="1.5" fill="#fffdf0"/><rect x="3.6" y="11.7" width="3.8" height="3" fill="url(#gb)"/><path d="M3.8 14.6H7.2L6.4 15.8H4.6Z" fill="#444"/></svg>
<svg class="abs" style="left:964.6px;top:572.5px;overflow:visible" width="11" height="16" viewBox="0 0 11 16"><path d="M5.5 0.5C2.8 0.5 0.8 2.6 0.8 5.2C0.8 7.1 1.8 8.3 2.6 9.5C3.1 10.3 3.5 11 3.6 11.8H7.4C7.5 11 7.9 10.3 8.4 9.5C9.2 8.3 10.2 7.1 10.2 5.2C10.2 2.6 8.2 0.5 5.5 0.5Z" fill="#fcfcfc" stroke="#c9ced6" stroke-width="0.9"/><path d="M3 5.6Q5.5 7 8 5.6" fill="none" stroke="#d6d6d6" stroke-width="0.8"/><rect x="3.6" y="11.7" width="3.8" height="3" fill="url(#gb)"/><path d="M3.8 14.6H7.2L6.4 15.8H4.6Z" fill="#333"/></svg>
<svg class="abs" style="left:1028.0px;top:572.5px;overflow:visible" width="11" height="16" viewBox="0 0 11 16"><path d="M5.5 0.5C2.8 0.5 0.8 2.6 0.8 5.2C0.8 7.1 1.8 8.3 2.6 9.5C3.1 10.3 3.5 11 3.6 11.8H7.4C7.5 11 7.9 10.3 8.4 9.5C9.2 8.3 10.2 7.1 10.2 5.2C10.2 2.6 8.2 0.5 5.5 0.5Z" fill="#fcfcfc" stroke="#c9ced6" stroke-width="0.9"/><path d="M3 5.6Q5.5 7 8 5.6" fill="none" stroke="#d6d6d6" stroke-width="0.8"/><rect x="3.6" y="11.7" width="3.8" height="3" fill="url(#gb)"/><path d="M3.8 14.6H7.2L6.4 15.8H4.6Z" fill="#333"/></svg>
<svg class="abs" style="left:1091.4px;top:572.5px;overflow:visible" width="11" height="16" viewBox="0 0 11 16"><path d="M5.5 0.5C2.8 0.5 0.8 2.6 0.8 5.2C0.8 7.1 1.8 8.3 2.6 9.5C3.1 10.3 3.5 11 3.6 11.8H7.4C7.5 11 7.9 10.3 8.4 9.5C9.2 8.3 10.2 7.1 10.2 5.2C10.2 2.6 8.2 0.5 5.5 0.5Z" fill="#fcfcfc" stroke="#c9ced6" stroke-width="0.9"/><path d="M3 5.6Q5.5 7 8 5.6" fill="none" stroke="#d6d6d6" stroke-width="0.8"/><rect x="3.6" y="11.7" width="3.8" height="3" fill="url(#gb)"/><path d="M3.8 14.6H7.2L6.4 15.8H4.6Z" fill="#333"/></svg>
<div class="cell" style="left:266px;top:608.5px;width:63.5px;height:58.0px"><div>28</div></div>
<div class="cell" style="left:329.5px;top:608.5px;width:125.5px;height:58.0px"><div>CXHS2400091</div></div>
<div class="cell" style="left:455px;top:608.5px;width:104.5px;height:58.0px"><div><span class="k">布瑞哌唑口</span><br><span class="k">溶膜</span></div></div>
<div class="cell" style="left:559.5px;top:608.5px;width:96.75px;height:58.0px"><div>2024–<br>09–11</div></div>
<div class="cell" style="left:656.25px;top:608.5px;width:83.0px;height:58.0px"><div><span class="k">排队待</span><br><span class="k">审评</span></div></div>
<svg class="abs" style="left:770.5px;top:630.5px;overflow:visible" width="11" height="16" viewBox="0 0 11 16"><path d="M5.5 0.5C2.8 0.5 0.8 2.6 0.8 5.2C0.8 7.1 1.8 8.3 2.6 9.5C3.1 10.3 3.5 11 3.6 11.8H7.4C7.5 11 7.9 10.3 8.4 9.5C9.2 8.3 10.2 7.1 10.2 5.2C10.2 2.6 8.2 0.5 5.5 0.5Z" fill="#fcfcfc" stroke="#c9ced6" stroke-width="0.9"/><path d="M3 5.6Q5.5 7 8 5.6" fill="none" stroke="#d6d6d6" stroke-width="0.8"/><rect x="3.6" y="11.7" width="3.8" height="3" fill="url(#gb)"/><path d="M3.8 14.6H7.2L6.4 15.8H4.6Z" fill="#333"/></svg>
<svg class="abs" style="left:838.4px;top:630.5px;overflow:visible" width="11" height="16" viewBox="0 0 11 16"><path d="M5.5 0.5C2.8 0.5 0.8 2.6 0.8 5.2C0.8 7.1 1.8 8.3 2.6 9.5C3.1 10.3 3.5 11 3.6 11.8H7.4C7.5 11 7.9 10.3 8.4 9.5C9.2 8.3 10.2 7.1 10.2 5.2C10.2 2.6 8.2 0.5 5.5 0.5Z" fill="#fcfcfc" stroke="#c9ced6" stroke-width="0.9"/><path d="M3 5.6Q5.5 7 8 5.6" fill="none" stroke="#d6d6d6" stroke-width="0.8"/><rect x="3.6" y="11.7" width="3.8" height="3" fill="url(#gb)"/><path d="M3.8 14.6H7.2L6.4 15.8H4.6Z" fill="#333"/></svg>
<svg class="abs" style="left:901.5px;top:630.5px;overflow:visible" width="11" height="16" viewBox="0 0 11 16"><path d="M5.5 0.5C2.8 0.5 0.8 2.6 0.8 5.2C0.8 7.1 1.8 8.3 2.6 9.5C3.1 10.3 3.5 11 3.6 11.8H7.4C7.5 11 7.9 10.3 8.4 9.5C9.2 8.3 10.2 7.1 10.2 5.2C10.2 2.6 8.2 0.5 5.5 0.5Z" fill="url(#gy)" stroke="#dca300" stroke-width="0.9"/><ellipse cx="5.5" cy="4.4" rx="2.6" ry="1.5" fill="#fffdf0"/><rect x="3.6" y="11.7" width="3.8" height="3" fill="url(#gb)"/><path d="M3.8 14.6H7.2L6.4 15.8H4.6Z" fill="#444"/></svg>
<svg class="abs" style="left:964.6px;top:630.5px;overflow:visible" width="11" height="16" viewBox="0 0 11 16"><path d="M5.5 0.5C2.8 0.5 0.8 2.6 0.8 5.2C0.8 7.1 1.8 8.3 2.6 9.5C3.1 10.3 3.5 11 3.6 11.8H7.4C7.5 11 7.9 10.3 8.4 9.5C9.2 8.3 10.2 7.1 10.2 5.2C10.2 2.6 8.2 0.5 5.5 0.5Z" fill="#fcfcfc" stroke="#c9ced6" stroke-width="0.9"/><path d="M3 5.6Q5.5 7 8 5.6" fill="none" stroke="#d6d6d6" stroke-width="0.8"/><rect x="3.6" y="11.7" width="3.8" height="3" fill="url(#gb)"/><path d="M3.8 14.6H7.2L6.4 15.8H4.6Z" fill="#333"/></svg>
<svg class="abs" style="left:1028.0px;top:630.5px;overflow:visible" width="11" height="16" viewBox="0 0 11 16"><path d="M5.5 0.5C2.8 0.5 0.8 2.6 0.8 5.2C0.8 7.1 1.8 8.3 2.6 9.5C3.1 10.3 3.5 11 3.6 11.8H7.4C7.5 11 7.9 10.3 8.4 9.5C9.2 8.3 10.2 7.1 10.2 5.2C10.2 2.6 8.2 0.5 5.5 0.5Z" fill="#fcfcfc" stroke="#c9ced6" stroke-width="0.9"/><path d="M3 5.6Q5.5 7 8 5.6" fill="none" stroke="#d6d6d6" stroke-width="0.8"/><rect x="3.6" y="11.7" width="3.8" height="3" fill="url(#gb)"/><path d="M3.8 14.6H7.2L6.4 15.8H4.6Z" fill="#333"/></svg>
<svg class="abs" style="left:1091.4px;top:630.5px;overflow:visible" width="11" height="16" viewBox="0 0 11 16"><path d="M5.5 0.5C2.8 0.5 0.8 2.6 0.8 5.2C0.8 7.1 1.8 8.3 2.6 9.5C3.1 10.3 3.5 11 3.6 11.8H7.4C7.5 11 7.9 10.3 8.4 9.5C9.2 8.3 10.2 7.1 10.2 5.2C10.2 2.6 8.2 0.5 5.5 0.5Z" fill="#fcfcfc" stroke="#c9ced6" stroke-width="0.9"/><path d="M3 5.6Q5.5 7 8 5.6" fill="none" stroke="#d6d6d6" stroke-width="0.8"/><rect x="3.6" y="11.7" width="3.8" height="3" fill="url(#gb)"/><path d="M3.8 14.6H7.2L6.4 15.8H4.6Z" fill="#333"/></svg>
<div class="cell" style="left:266px;top:666.5px;width:63.5px;height:58.0px"><div>29</div></div>
<div class="cell" style="left:329.5px;top:666.5px;width:125.5px;height:58.0px"><div>JXHS2400063</div></div>
<div class="cell" style="left:455px;top:666.5px;width:104.5px;height:58.0px"><div><span class="k">利司扑兰片</span></div></div>
<div class="cell" style="left:559.5px;top:666.5px;width:96.75px;height:58.0px"><div>2024–<br>09–12</div></div>
<div class="cell" style="left:656.25px;top:666.5px;width:83.0px;height:58.0px"><div><span class="k">排队待</span><br><span class="k">审评</span></div></div>
<svg class="abs" style="left:770.5px;top:688.5px;overflow:visible" width="11" height="16" viewBox="0 0 11 16"><path d="M5.5 0.5C2.8 0.5 0.8 2.6 0.8 5.2C0.8 7.1 1.8 8.3 2.6 9.5C3.1 10.3 3.5 11 3.6 11.8H7.4C7.5 11 7.9 10.3 8.4 9.5C9.2 8.3 10.2 7.1 10.2 5.2C10.2 2.6 8.2 0.5 5.5 0.5Z" fill="#fcfcfc" stroke="#c9ced6" stroke-width="0.9"/><path d="M3 5.6Q5.5 7 8 5.6" fill="none" stroke="#d6d6d6" stroke-width="0.8"/><rect x="3.6" y="11.7" width="3.8" height="3" fill="url(#gb)"/><path d="M3.8 14.6H7.2L6.4 15.8H4.6Z" fill="#333"/></svg>
<svg class="abs" style="left:838.4px;top:688.5px;overflow:visible" width="11" height="16" viewBox="0 0 11 16"><path d="M5.5 0.5C2.8 0.5 0.8 2.6 0.8 5.2C0.8 7.1 1.8 8.3 2.6 9.5C3.1 10.3 3.5 11 3.6 11.8H7.4C7.5 11 7.9 10.3 8.4 9.5C9.2 8.3 10.2 7.1 10.2 5.2C10.2 2.6 8.2 0.5 5.5 0.5Z" fill="#fcfcfc" stroke="#c9ced6" stroke-width="0.9"/><path d="M3 5.6Q5.5 7 8 5.6" fill="none" stroke="#d6d6d6" stroke-width="0.8"/><rect x="3.6" y="11.7" width="3.8" height="3" fill="url(#gb)"/><path d="M3.8 14.6H7.2L6.4 15.8H4.6Z" fill="#333"/></svg>
<svg class="abs" style="left:901.5px;top:688.5px;overflow:visible" width="11" height="16" viewBox="0 0 11 16"><path d="M5.5 0.5C2.8 0.5 0.8 2.6 0.8 5.2C0.8 7.1 1.8 8.3 2.6 9.5C3.1 10.3 3.5 11 3.6 11.8H7.4C7.5 11 7.9 10.3 8.4 9.5C9.2 8.3 10.2 7.1 10.2 5.2C10.2 2.6 8.2 0.5 5.5 0.5Z" fill="url(#gy)" stroke="#dca300" stroke-width="0.9"/><ellipse cx="5.5" cy="4.4" rx="2.6" ry="1.5" fill="#fffdf0"/><rect x="3.6" y="11.7" width="3.8" height="3" fill="url(#gb)"/><path d="M3.8 14.6H7.2L6.4 15.8H4.6Z" fill="#444"/></svg>
<svg class="abs" style="left:964.6px;top:688.5px;overflow:visible" width="11" height="16" viewBox="0 0 11 16"><path d="M5.5 0.5C2.8 0.5 0.8 2.6 0.8 5.2C0.8 7.1 1.8 8.3 2.6 9.5C3.1 10.3 3.5 11 3.6 11.8H7.4C7.5 11 7.9 10.3 8.4 9.5C9.2 8.3 10.2 7.1 10.2 5.2C10.2 2.6 8.2 0.5 5.5 0.5Z" fill="#fcfcfc" stroke="#c9ced6" stroke-width="0.9"/><path d="M3 5.6Q5.5 7 8 5.6" fill="none" stroke="#d6d6d6" stroke-width="0.8"/><rect x="3.6" y="11.7" width="3.8" height="3" fill="url(#gb)"/><path d="M3.8 14.6H7.2L6.4 15.8H4.6Z" fill="#333"/></svg>
<svg class="abs" style="left:1028.0px;top:688.5px;overflow:visible" width="11" height="16" viewBox="0 0 11 16"><path d="M5.5 0.5C2.8 0.5 0.8 2.6 0.8 5.2C0.8 7.1 1.8 8.3 2.6 9.5C3.1 10.3 3.5 11 3.6 11.8H7.4C7.5 11 7.9 10.3 8.4 9.5C9.2 8.3 10.2 7.1 10.2 5.2C10.2 2.6 8.2 0.5 5.5 0.5Z" fill="#fcfcfc" stroke="#c9ced6" stroke-width="0.9"/><path d="M3 5.6Q5.5 7 8 5.6" fill="none" stroke="#d6d6d6" stroke-width="0.8"/><rect x="3.6" y="11.7" width="3.8" height="3" fill="url(#gb)"/><path d="M3.8 14.6H7.2L6.4 15.8H4.6Z" fill="#333"/></svg>
<svg class="abs" style="left:1091.4px;top:688.5px;overflow:visible" width="11" height="16" viewBox="0 0 11 16"><path d="M5.5 0.5C2.8 0.5 0.8 2.6 0.8 5.2C0.8 7.1 1.8 8.3 2.6 9.5C3.1 10.3 3.5 11 3.6 11.8H7.4C7.5 11 7.9 10.3 8.4 9.5C9.2 8.3 10.2 7.1 10.2 5.2C10.2 2.6 8.2 0.5 5.5 0.5Z" fill="#fcfcfc" stroke="#c9ced6" stroke-width="0.9"/><path d="M3 5.6Q5.5 7 8 5.6" fill="none" stroke="#d6d6d6" stroke-width="0.8"/><rect x="3.6" y="11.7" width="3.8" height="3" fill="url(#gb)"/><path d="M3.8 14.6H7.2L6.4 15.8H4.6Z" fill="#333"/></svg>
<div class="cell" style="left:266px;top:724.5px;width:63.5px;height:57.200000000000045px"><div>30</div></div>
<div class="cell" style="left:329.5px;top:724.5px;width:125.5px;height:57.200000000000045px"><div>CXHS2400092</div></div>
<div class="cell" style="left:455px;top:724.5px;width:104.5px;height:57.200000000000045px"><div><span class="k">注射用苯磺</span><br><span class="k">酸瑞马唑仑</span></div></div>
<div class="cell" style="left:559.5px;top:724.5px;width:96.75px;height:57.200000000000045px"><div>2024–<br>09–15</div></div>
<div class="cell" style="left:656.25px;top:724.5px;width:83.0px;height:57.200000000000045px"><div><span class="k">排队待</span><br><span class="k">审评</span></div></div>
<svg class="abs" style="left:770.5px;top:746.1px;overflow:visible" width="11" height="16" viewBox="0 0 11 16"><path d="M5.5 0.5C2.8 0.5 0.8 2.6 0.8 5.2C0.8 7.1 1.8 8.3 2.6 9.5C3.1 10.3 3.5 11 3.6 11.8H7.4C7.5 11 7.9 10.3 8.4 9.5C9.2 8.3 10.2 7.1 10.2 5.2C10.2 2.6 8.2 0.5 5.5 0.5Z" fill="#fcfcfc" stroke="#c9ced6" stroke-width="0.9"/><path d="M3 5.6Q5.5 7 8 5.6" fill="none" stroke="#d6d6d6" stroke-width="0.8"/><rect x="3.6" y="11.7" width="3.8" height="3" fill="url(#gb)"/><path d="M3.8 14.6H7.2L6.4 15.8H4.6Z" fill="#333"/></svg>
<svg class="abs" style="left:838.4px;top:746.1px;overflow:visible" width="11" height="16" viewBox="0 0 11 16"><path d="M5.5 0.5C2.8 0.5 0.8 2.6 0.8 5.2C0.8 7.1 1.8 8.3 2.6 9.5C3.1 10.3 3.5 11 3.6 11.8H7.4C7.5 11 7.9 10.3 8.4 9.5C9.2 8.3 10.2 7.1 10.2 5.2C10.2 2.6 8.2 0.5 5.5 0.5Z" fill="#fcfcfc" stroke="#c9ced6" stroke-width="0.9"/><path d="M3 5.6Q5.5 7 8 5.6" fill="none" stroke="#d6d6d6" stroke-width="0.8"/><rect x="3.6" y="11.7" width="3.8" height="3" fill="url(#gb)"/><path d="M3.8 14.6H7.2L6.4 15.8H4.6Z" fill="#333"/></svg>
<svg class="abs" style="left:901.5px;top:746.1px;overflow:visible" width="11" height="16" viewBox="0 0 11 16"><path d="M5.5 0.5C2.8 0.5 0.8 2.6 0.8 5.2C0.8 7.1 1.8 8.3 2.6 9.5C3.1 10.3 3.5 11 3.6 11.8H7.4C7.5 11 7.9 10.3 8.4 9.5C9.2 8.3 10.2 7.1 10.2 5.2C10.2 2.6 8.2 0.5 5.5 0.5Z" fill="url(#gy)" stroke="#dca300" stroke-width="0.9"/><ellipse cx="5.5" cy="4.4" rx="2.6" ry="1.5" fill="#fffdf0"/><rect x="3.6" y="11.7" width="3.8" height="3" fill="url(#gb)"/><path d="M3.8 14.6H7.2L6.4 15.8H4.6Z" fill="#444"/></svg>
<svg class="abs" style="left:964.6px;top:746.1px;overflow:visible" width="11" height="16" viewBox="0 0 11 16"><path d="M5.5 0.5C2.8 0.5 0.8 2.6 0.8 5.2C0.8 7.1 1.8 8.3 2.6 9.5C3.1 10.3 3.5 11 3.6 11.8H7.4C7.5 11 7.9 10.3 8.4 9.5C9.2 8.3 10.2 7.1 10.2 5.2C10.2 2.6 8.2 0.5 5.5 0.5Z" fill="#fcfcfc" stroke="#c9ced6" stroke-width="0.9"/><path d="M3 5.6Q5.5 7 8 5.6" fill="none" stroke="#d6d6d6" stroke-width="0.8"/><rect x="3.6" y="11.7" width="3.8" height="3" fill="url(#gb)"/><path d="M3.8 14.6H7.2L6.4 15.8H4.6Z" fill="#333"/></svg>
<svg class="abs" style="left:1028.0px;top:746.1px;overflow:visible" width="11" height="16" viewBox="0 0 11 16"><path d="M5.5 0.5C2.8 0.5 0.8 2.6 0.8 5.2C0.8 7.1 1.8 8.3 2.6 9.5C3.1 10.3 3.5 11 3.6 11.8H7.4C7.5 11 7.9 10.3 8.4 9.5C9.2 8.3 10.2 7.1 10.2 5.2C10.2 2.6 8.2 0.5 5.5 0.5Z" fill="#fcfcfc" stroke="#c9ced6" stroke-width="0.9"/><path d="M3 5.6Q5.5 7 8 5.6" fill="none" stroke="#d6d6d6" stroke-width="0.8"/><rect x="3.6" y="11.7" width="3.8" height="3" fill="url(#gb)"/><path d="M3.8 14.6H7.2L6.4 15.8H4.6Z" fill="#333"/></svg>
<svg class="abs" style="left:1091.4px;top:746.1px;overflow:visible" width="11" height="16" viewBox="0 0 11 16"><path d="M5.5 0.5C2.8 0.5 0.8 2.6 0.8 5.2C0.8 7.1 1.8 8.3 2.6 9.5C3.1 10.3 3.5 11 3.6 11.8H7.4C7.5 11 7.9 10.3 8.4 9.5C9.2 8.3 10.2 7.1 10.2 5.2C10.2 2.6 8.2 0.5 5.5 0.5Z" fill="#fcfcfc" stroke="#c9ced6" stroke-width="0.9"/><path d="M3 5.6Q5.5 7 8 5.6" fill="none" stroke="#d6d6d6" stroke-width="0.8"/><rect x="3.6" y="11.7" width="3.8" height="3" fill="url(#gb)"/><path d="M3.8 14.6H7.2L6.4 15.8H4.6Z" fill="#333"/></svg>
<div class="hl" style="left:265px;top:126.5px;width:1.4px;height:655.2px"></div>
<div class="hl" style="left:328.5px;top:126.5px;width:1.4px;height:655.2px"></div>
<div class="hl" style="left:454px;top:126.5px;width:1.4px;height:655.2px"></div>
<div class="hl" style="left:558.5px;top:126.5px;width:1.4px;height:655.2px"></div>
<div class="hl" style="left:655.25px;top:126.5px;width:1.4px;height:655.2px"></div>
<div class="hl" style="left:738.25px;top:126.5px;width:1.4px;height:655.2px"></div>
<div class="hl" style="left:811px;top:126.5px;width:1.4px;height:655.2px"></div>
<div class="hl" style="left:874px;top:126.5px;width:1.4px;height:655.2px"></div>
<div class="hl" style="left:937.25px;top:126.5px;width:1.4px;height:655.2px"></div>
<div class="hl" style="left:1000.25px;top:126.5px;width:1.4px;height:655.2px"></div>
<div class="hl" style="left:1064px;top:126.5px;width:1.4px;height:655.2px"></div>
<div class="hl" style="left:1127px;top:126.5px;width:1.4px;height:655.2px"></div>
<div class="hl" style="left:1210px;top:126.5px;width:1.4px;height:655.2px"></div>
<div class="hl" style="left:265px;top:125.5px;width:947px;height:1.5px"></div>
<div class="hl" style="left:265px;top:183.5px;width:947px;height:1.5px"></div>
<div class="hl" style="left:265px;top:241.2px;width:947px;height:1.5px"></div>
<div class="hl" style="left:265px;top:299px;width:947px;height:1.5px"></div>
<div class="hl" style="left:265px;top:357px;width:947px;height:1.5px"></div>
<div class="hl" style="left:265px;top:415px;width:947px;height:1.5px"></div>
<div class="hl" style="left:265px;top:473px;width:947px;height:1.5px"></div>
<div class="hl" style="left:265px;top:549.5px;width:947px;height:1.5px"></div>
<div class="hl" style="left:265px;top:607.5px;width:947px;height:1.5px"></div>
<div class="hl" style="left:265px;top:665.5px;width:947px;height:1.5px"></div>
<div class="hl" style="left:265px;top:723.5px;width:947px;height:1.5px"></div>
<div class="hl" style="left:265px;top:780.7px;width:947px;height:1.5px"></div>
<div class="sel" style="left:286.5px;top:103px;width:271px;height:32.7px;line-height:32px;box-shadow:0 1px 2px rgba(0,0,0,0.06)"><span class="k">预防用生物制品</span></div>
<div class="arr" style="left:537px;top:117px"></div>
<div class="t" style="left:265.5px;top:811px;font-size:11.4px;color:#444">共</div><div class="t" style="left:281.5px;top:811px;font-size:12px;color:#444">254</div><div class="t" style="left:306.5px;top:811px;font-size:11.4px;color:#444">条</div>
<div class="pg" style="left:328.5px;width:67.0px"><span class="pk">上一页</span></div>
<div class="pg" style="left:394.5px;width:36.5px">1</div>
<div class="pg" style="left:430px;width:38px">2</div>
<div class="pg" style="left:467px;width:38px;background:#1a6ee2;border-color:#1a6ee2;color:#fff;border-radius:2px">3</div>
<div class="pg" style="left:505px;width:38px">4</div>
<div class="pg" style="left:542px;width:39px">5</div>
<div class="pg" style="left:580px;width:43.5px"><span class="pk">…</span></div>
<div class="pg" style="left:622.5px;width:67.0px"><span class="pk">至末页</span></div>
<div class="pg" style="left:688.5px;width:67.5px"><span class="pk">下一页</span></div>
<div class="pg" style="left:764.5px;top:804.3px;height:22.8px;width:72px;color:#2b8af0;border-radius:2px;justify-content:flex-start;padding-left:5px;padding-top:2px">10&nbsp;<span style="font-size:11.6px;letter-spacing:0.3px">条/页</span></div>
<svg class="abs" style="left:822px;top:810px" width="10" height="11" viewBox="0 0 10 11"><path d="M1.2 4.8L4.8 1.4L8.4 4.8M1.2 6.4L4.8 9.8L8.4 6.4" fill="none" stroke="#2b8af0" stroke-width="1.4"/></svg>
<svg class="abs" style="left:850px;top:800px" width="30" height="30" viewBox="0 0 30 30"><path d="M22.8 16.3A7.3 7.3 0 1 1 21.4 10.4" fill="none" stroke="#3a3a3a" stroke-width="1.3"/><path d="M22.7 8.2V12.8H18.1" fill="none" stroke="#3a3a3a" stroke-width="1.4"/></svg>
<div class="t" style="left:895px;top:811px;font-size:11.4px;letter-spacing:0.3px;color:#333">到第</div>
<div class="pg" style="left:928.5px;top:802px;height:28.5px;width:48.5px;border-radius:2px">3</div>
<div class="t" style="left:987px;top:811px;font-size:11.4px;color:#333">页</div>
<div class="pg" style="left:1009.5px;top:802px;height:28.5px;width:44.5px;border-radius:2px;color:#2b8af0;padding-top:3px"><span class="pk">确定</span></div>
<div class="abs" style="left:266px;top:846px;width:945px;height:76.5px;background:#e6f0fc;border-left:5px solid #1e9bff"></div>
<div class="t" style="left:281px;top:860px;font-size:18.4px;letter-spacing:0.75px;color:#1a1a1a">说明：</div>
<svg class="abs" style="left:355.8px;top:861.5px;overflow:visible" width="11" height="16" viewBox="0 0 11 16"><path d="M5.5 0.5C2.8 0.5 0.8 2.6 0.8 5.2C0.8 7.1 1.8 8.3 2.6 9.5C3.1 10.3 3.5 11 3.6 11.8H7.4C7.5 11 7.9 10.3 8.4 9.5C9.2 8.3 10.2 7.1 10.2 5.2C10.2 2.6 8.2 0.5 5.5 0.5Z" fill="url(#gy)" stroke="#dca300" stroke-width="0.9"/><ellipse cx="5.5" cy="4.4" rx="2.6" ry="1.5" fill="#fffdf0"/><rect x="3.6" y="11.7" width="3.8" height="3" fill="url(#gb)"/><path d="M3.8 14.6H7.2L6.4 15.8H4.6Z" fill="#444"/></svg>
<div class="t" style="left:368px;top:860px;font-size:18.4px;letter-spacing:0.75px;color:#1a1a1a">：本专业正在审评</div>
<svg class="abs" style="left:537px;top:861.5px;overflow:visible" width="11" height="16" viewBox="0 0 11 16"><rect x="-2.5" y="0" width="16" height="16" fill="#f3f8fd"/><path d="M5.5 0.5C2.8 0.5 0.8 2.6 0.8 5.2C0.8 7.1 1.8 8.3 2.6 9.5C3.1 10.3 3.5 11 3.6 11.8H7.4C7.5 11 7.9 10.3 8.4 9.5C9.2 8.3 10.2 7.1 10.2 5.2C10.2 2.6 8.2 0.5 5.5 0.5Z" fill="url(#gy)" stroke="#dca300" stroke-width="0.9"/><ellipse cx="5.5" cy="4.4" rx="2.6" ry="1.5" fill="#fffdf0"/><rect x="3.6" y="11.7" width="3.8" height="3" fill="url(#gb)"/><path d="M3.8 14.6H7.2L6.4 15.8H4.6Z" fill="#444"/></svg>
<div class="t" style="left:549px;top:860px;font-size:18.4px;letter-spacing:0.75px;color:#1a1a1a">：本专业排队待审评</div>
<svg class="abs" style="left:737.3px;top:861.5px;overflow:visible" width="11" height="16" viewBox="0 0 11 16"><path d="M5.5 0.5C2.8 0.5 0.8 2.6 0.8 5.2C0.8 7.1 1.8 8.3 2.6 9.5C3.1 10.3 3.5 11 3.6 11.8H7.4C7.5 11 7.9 10.3 8.4 9.5C9.2 8.3 10.2 7.1 10.2 5.2C10.2 2.6 8.2 0.5 5.5 0.5Z" fill="#fcfcfc" stroke="#c9ced6" stroke-width="0.9"/><path d="M3 5.6Q5.5 7 8 5.6" fill="none" stroke="#d6d6d6" stroke-width="0.8"/><rect x="3.6" y="11.7" width="3.8" height="3" fill="url(#gb)"/><path d="M3.8 14.6H7.2L6.4 15.8H4.6Z" fill="#333"/></svg>
<div class="t" style="left:749.5px;top:860px;font-size:18.4px;letter-spacing:0.75px;color:#1a1a1a">：本专业已完成审评</div>
<div class="t" style="left:935px;top:860px;font-size:18.4px;letter-spacing:0.75px;color:#1a1a1a">空：本专业未启动</div>
<div class="t" style="left:1099.5px;top:860px;font-size:18.4px;letter-spacing:0.75px;color:#1a1a1a">所有专业结</div>
<div class="t" style="left:281px;top:893px;font-size:18.4px;letter-spacing:0.75px;color:#1a1a1a">束后将进入综合审评阶段。</div>
<div class="abs" style="left:0;top:941px;width:1280px;height:1px;background:#fcfdff"></div><div class="abs" style="left:1277px;top:0;width:3px;height:942px;background:#fff"></div>
</body></html>
